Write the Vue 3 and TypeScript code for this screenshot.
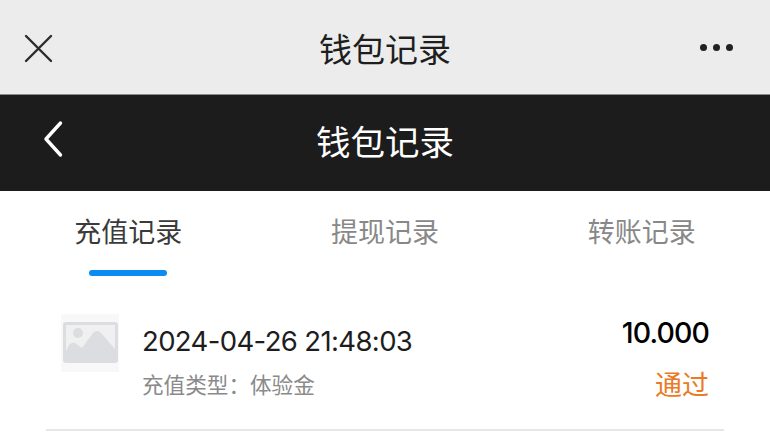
<script setup lang="ts">
const tabs = ['充值记录', '提现记录', '转账记录']
const active = 0
</script>

<template>
  <div class="page">
    <div class="top-bar">
      <svg class="close" width="30" height="30" viewBox="0 0 30 30">
        <path d="M2 2L27 27M27 2L2 27" stroke="#2c2c2c" stroke-width="2.4" stroke-linecap="round" fill="none" />
      </svg>
      <span class="top-title">钱包记录</span>
      <div class="dots"><i></i><i></i><i></i></div>
    </div>
    <div class="nav-bar">
      <svg class="back" width="24" height="38" viewBox="0 0 24 38">
        <path d="M19.5 3L5 19L19.5 35" stroke="#fff" stroke-width="3.4" stroke-linecap="round" stroke-linejoin="round" fill="none" />
      </svg>
      <span class="nav-title">钱包记录</span>
    </div>
    <div class="tabs">
      <div v-for="(t, i) in tabs" :key="t" class="tab" :class="{ on: i === active }">
        <span>{{ t }}</span>
        <div v-if="i === active" class="line"></div>
      </div>
    </div>
    <div class="list">
      <div class="row">
        <div class="thumb">
          <svg width="58" height="58" viewBox="0 0 58 58">
            <rect x="2" y="8" width="55" height="41" rx="3" fill="#dcdde0" />
            <path d="M5 11H54V35L40 19Q36 15 32 19L21 34L14 29Q11 28 8 31L5 37Z" fill="#f0f0f1" />
            <circle cx="17" cy="19" r="5" fill="#dcdde0" />
          </svg>
        </div>
        <div class="info">
          <div class="time">2024-04-26 21:48:03</div>
          <div class="type">充值类型：体验金</div>
        </div>
        <div class="right">
          <div class="amount">10.000</div>
          <div class="status">通过</div>
        </div>
      </div>
    </div>
  </div>
</template>

<style>
html,
body {
  margin: 0;
  background: #fff;
}
</style>

<style scoped>
.page {
  width: 770px;
  height: 447px;
  overflow: hidden;
  background: #fff;
  font-family: "Liberation Sans", "Noto Sans CJK SC", sans-serif;
}

.top-bar {
  height: 95px;
  box-sizing: border-box;
  background: #ececec;
  border-bottom: 1px solid #8a8a8a;
  display: flex;
  align-items: center;
  justify-content: center;
  position: relative;
}

.close {
  position: absolute;
  left: 24px;
  top: 34px;
}

.top-title {
  font-size: 33px;
  color: #1e1e1e;
  position: relative;
  top: 1px;
}

.dots {
  position: absolute;
  right: 37px;
  top: 44px;
  display: flex;
  gap: 6px;
}

.dots i {
  width: 7px;
  height: 7px;
  border-radius: 50%;
  background: #222;
}

.nav-bar {
  height: 96px;
  background: #1c1c1c;
  display: flex;
  align-items: center;
  justify-content: center;
  position: relative;
}

.back {
  position: absolute;
  left: 41px;
  top: 25px;
}

.nav-title {
  font-size: 34.5px;
  color: #fff;
  position: relative;
  top: -3px;
}

.tabs {
  height: 92px;
  display: flex;
}

.tab {
  flex: 1;
  text-align: center;
  font-size: 27px;
  color: #888;
  padding-top: 24px;
  line-height: 36px;
}

.tab.on {
  color: #3a3a3a;
}

.line {
  width: 78px;
  height: 6px;
  border-radius: 3px;
  background: #0a8cf0;
  margin: 19px auto 0;
}

.list {
  padding: 0 46px;
}

.row {
  display: flex;
  align-items: flex-start;
  height: 148px;
  box-sizing: border-box;
  border-bottom: 2px solid #e6e6e6;
  padding: 31px 15px 0;
}

.thumb {
  width: 58px;
  height: 58px;
  background: #f8f8f9;
}

.info {
  flex: 1;
  margin-left: 24px;
  padding-top: 9px;
}

.time {
  font-size: 27.5px;
  letter-spacing: -0.63px;
  color: #1d1d1d;
  line-height: 36px;
  margin-left: -1px;
  font-family: "Inter", "Noto Sans CJK SC", sans-serif;
}

.type {
  font-size: 21.6px;
  color: #8a8a8a;
  line-height: 30px;
  margin-top: 12px;
  margin-left: -1px;
}

.right {
  text-align: right;
  padding-top: 1px;
}

.amount {
  font-size: 28.5px;
  letter-spacing: -0.9px;
  color: #000;
  line-height: 36px;
  font-family: "Inter", "Noto Sans CJK SC", sans-serif;
  font-weight: 500;
}

.status {
  font-size: 27px;
  color: #ea7a26;
  line-height: 32px;
  margin-top: 19px;
}
</style>
